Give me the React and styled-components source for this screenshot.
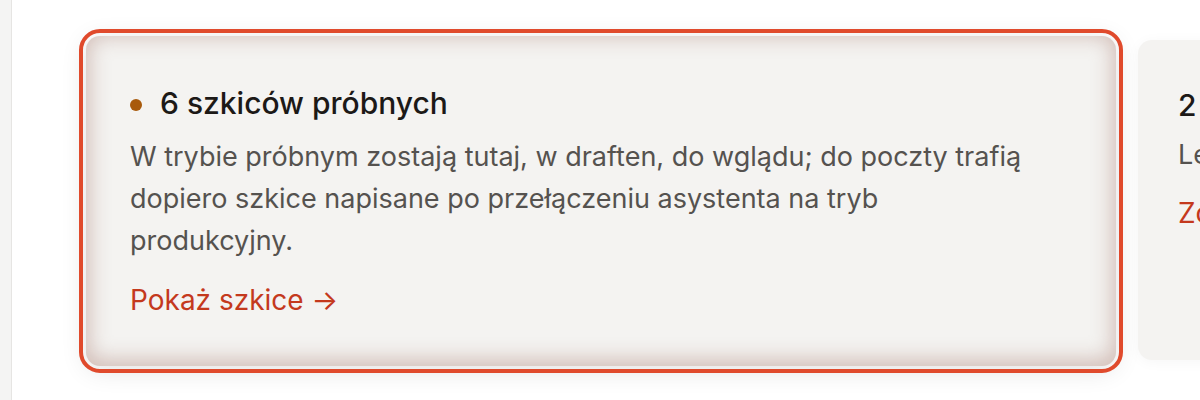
import React from "react";
import styled, { createGlobalStyle } from "styled-components";

const GlobalStyle = createGlobalStyle`
  html, body {
    margin: 0;
    padding: 0;
    background: #ffffff;
    font-family: Inter, "Noto Sans", "Liberation Sans", sans-serif;
  }
`;

// lines are kept as in the screenshot (the paragraph breaks after "tryb")
const cards = [
  {
    id: "trial",
    dot: true,
    active: true,
    title: "6 szkiców próbnych",
    lines: [
      "W trybie próbnym zostają tutaj, w draften, do wglądu; do poczty trafią",
      "dopiero szkice napisane po przełączeniu asystenta na tryb",
      "produkcyjny.",
    ],
    link: "Pokaż szkice →",
  },
  {
    id: "waiting",
    dot: false,
    active: false,
    title: "2 odpowiedzi",
    lines: ["Leżą w kolejce."],
    link: "Zobacz →",
  },
];

export default function App() {
  return (
    <>
      <GlobalStyle />
      <Page>
        <Sidebar />
        <Main>
          <CardRow>
            {cards.map(card => (
              <Card key={card.id} $active={card.active}>
                <Title>
                  {card.dot && <Dot />}
                  {card.title}
                </Title>
                <Text $active={card.active}>
                  {card.lines.map((line, i) => (
                    <Line key={i}>{line}</Line>
                  ))}
                </Text>
                <LinkText href="#" $active={card.active}>
                  {card.link}
                </LinkText>
              </Card>
            ))}
          </CardRow>
        </Main>
      </Page>
    </>
  );
}

const Page = styled.div`
  display: flex;
  width: 1200px;
  height: 400px;
  overflow: hidden;
`;

const Sidebar = styled.div`
  width: 11px;
  flex-shrink: 0;
  background: #f4f4f3;
  border-right: 1px solid #e6e5e3;
`;

const Main = styled.div`
  flex: 1;
  overflow: hidden;
  padding: 36px 0 0 74px;
`;

const CardRow = styled.div`
  display: flex;
  align-items: flex-start;
  gap: 22px;
`;

const Card = styled.div`
  flex-shrink: 0;
  box-sizing: border-box;
  width: ${p => (p.$active ? "1030px" : "420px")};
  height: ${p => (p.$active ? "330px" : "320px")};
  margin-top: ${p => (p.$active ? "0" : "4px")};
  padding: ${p => (p.$active ? "44px" : "42px 40px")};
  background: #f4f3f1;
  border-radius: 14px;
  outline: ${p => (p.$active ? "4px solid #e04a2c" : "none")};
  outline-offset: 3px;
  box-shadow: ${p =>
    p.$active
      ? "inset 0 -3px 20px 4px rgba(150, 95, 80, 0.34), 0 4px 26px rgba(0, 0, 0, 0.12)"
      : "0 2px 14px rgba(0, 0, 0, 0.04)"};
`;

const Title = styled.div`
  display: flex;
  align-items: center;
  gap: 18px;
  font-size: 30px;
  font-weight: 500;
  line-height: 46px;
  color: #1c1917;
  white-space: nowrap;
`;

const Dot = styled.span`
  width: 12px;
  height: 12px;
  border-radius: 50%;
  background: #a85a0c;
  flex-shrink: 0;
  margin-top: 3px;
`;

const Text = styled.p`
  margin: ${p => (p.$active ? "10px" : "6px")} 0 0;
  font-size: 27px;
  line-height: 42px;
  color: #55524f;
`;

const Line = styled.span`
  display: block;
  white-space: nowrap;
`;

const LinkText = styled.a`
  display: block;
  margin-top: ${p => (p.$active ? "17px" : "16px")};
  font-size: 28px;
  line-height: 42px;
  color: #c4391d;
  text-decoration: none;
  white-space: nowrap;
`;
